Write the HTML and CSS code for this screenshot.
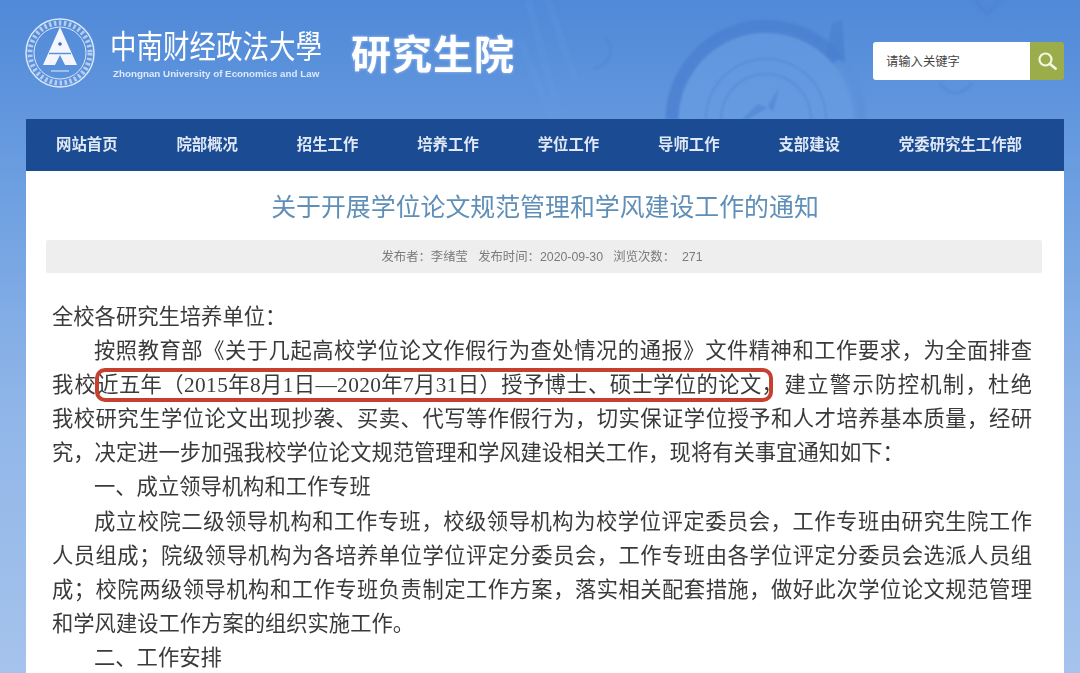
FILE: index.html
```html
<!DOCTYPE html>
<html>
<head>
    <title>关于开展学位论文规范管理和学风建设工作的通知</title>
    <meta charset="UTF-8" />
    <link rel="stylesheet" href="styles.css">
</head>
<body>
    <svg class="bgArt" width="1080" height="119" viewBox="0 0 1080 119" fill="none">
        <circle cx="766" cy="121" r="92" fill="#6a9fe2" fill-opacity="0.55"/>
        <path d="M672 119A94 94 0 0 1 838 60" stroke="#4a80cf" stroke-width="13" stroke-opacity="0.8"/>
        <path d="M838 60A94 94 0 0 1 860 119" stroke="#5a90d8" stroke-width="13" stroke-opacity="0.6"/>
        <path d="M826 56L832 24L842 20L845 62Z" fill="#4a80cf" fill-opacity="0.75"/>
        <g stroke="#4d84d0" stroke-opacity="0.6" stroke-width="1.500">
            <path d="M706 119A60 60 0 0 1 826 119"/>
            <path d="M721 119A45 45 0 0 1 811 119"/>
            <path d="M604 36A18 18 0 0 1 594 68" stroke-width="2"/>
            <path d="M940 84Q955 102 972 84" stroke-width="2"/>
            <path d="M975 0L987 14L1000 0" stroke-width="4"/>
        </g>
        <path d="M742 119L758 104L768 108L748 119Z" fill="#5087d2" fill-opacity="0.7"/>
        <path d="M768 106L779 88L773 112Z" fill="#5087d2" fill-opacity="0.7"/>
        <path d="M528 0L560 119M548 0L575 80M520 40L552 119" stroke="#6da0e2" stroke-width="8" stroke-opacity="0.15"/>
    </svg>
    <div class="page">
        <div class="header">
            <svg class="seal" width="70" height="70" viewBox="0 0 70 70" fill="none">
                <circle cx="35" cy="35" r="34" stroke="#dbe8f9" stroke-width="1.500"/>
                <circle cx="35" cy="35" r="26" stroke="#dbe8f9" stroke-width="1"/>
                <circle cx="35" cy="35" r="30" stroke="#dbe8f9" stroke-width="5" stroke-dasharray="2.500 2.500" stroke-opacity="0.7"/>
                <path d="M35 9L52 47H40L35 37L30 47H18Z" fill="#f3f7fd"/>
                <path d="M24 35.500h22" stroke="#5b93d9" stroke-width="1.500"/>
                <circle cx="35" cy="26" r="1.800" fill="#3f6fb5"/>
                <path d="M26 53h18" stroke="#e4eefb" stroke-width="1"/>
            </svg>
            <div class="school">
                <div class="schoolCn">中南财经政法大學</div>
                <div class="schoolEn">Zhongnan University of Economics and Law</div>
            </div>
            <div class="dept">研究生院</div>
            <div class="search">
                <div class="searchInput">请输入关键字</div>
                <div class="searchBtn">
                    <svg width="20" height="20" viewBox="0 0 20 20" fill="none" stroke="#f4f6e6">
                        <circle cx="8.500" cy="8.500" r="6" stroke-width="2.200"/>
                        <path d="M13 13l5.500 4.500" stroke-width="2.800" stroke-linecap="round"/>
                    </svg>
                </div>
            </div>
        </div>

        <div class="nav">
            <a>网站首页</a>
            <a>院部概况</a>
            <a>招生工作</a>
            <a>培养工作</a>
            <a>学位工作</a>
            <a>导师工作</a>
            <a>支部建设</a>
            <a>党委研究生工作部</a>
        </div>

        <div class="content">
            <h1 class="title">关于开展学位论文规范管理和学风建设工作的通知</h1>
            <div class="meta">发布者&#65306;李绪莹&nbsp;&nbsp;&nbsp;发布时间&#65306;2020-09-30&nbsp;&nbsp;&nbsp;浏览次数&#65306;&nbsp;&nbsp;271</div>
            <div class="article">
                <div class="line last">全校各研究生培养单位&#65306;</div>
                <div class="line indent">按照教育部《关于几起高校学位论文作假行为查处情况的通报》文件精神和工作要求&#65292;为全面排查</div>
                <div class="line">我校<span class="mark">近五年&#65288;2015年8月1日—2020年7月31日&#65289;授予博士、硕士学位的论文&#65292;</span>建立警示防控机制&#65292;杜绝</div>
                <div class="line">我校研究生学位论文出现抄袭、买卖、代写等作假行为&#65292;切实保证学位授予和人才培养基本质量&#65292;经研</div>
                <div class="line last">究&#65292;决定进一步加强我校学位论文规范管理和学风建设相关工作&#65292;现将有关事宜通知如下&#65306;</div>
                <div class="line last indent">一、成立领导机构和工作专班</div>
                <div class="line indent">成立校院二级领导机构和工作专班&#65292;校级领导机构为校学位评定委员会&#65292;工作专班由研究生院工作</div>
                <div class="line">人员组成&#65307;院级领导机构为各培养单位学位评定分委员会&#65292;工作专班由各学位评定分委员会选派人员组</div>
                <div class="line">成&#65307;校院两级领导机构和工作专班负责制定工作方案&#65292;落实相关配套措施&#65292;做好此次学位论文规范管理</div>
                <div class="line last">和学风建设工作方案的组织实施工作。</div>
                <div class="line last indent">二、工作安排</div>
            </div>
        </div>
    </div>
</body>
</html>
```

FILE: styles.css
```css
html, body
{
    margin: 0;
    height: 100%;
    overflow: hidden;
}

body
{
    font-family: "Liberation Serif", "Noto Sans CJK SC", serif;
    background: linear-gradient(180deg, #5089d8 0, #6a9de0 170px, #8fb5e8 400px, #a5c3ec 100%);
    position: relative;
}

.bgArt
{
    position: absolute;
    left: 0;
    top: 0;
    filter: blur(0.8px);
}

.page
{
    position: relative;
    margin: 0 16px 0 26px;
    filter: blur(0.4px);
}

.header
{
    height: 119px;
    display: flex;
    align-items: center;
    color: #fff;
    font-family: "Noto Sans CJK SC", sans-serif;
}

.seal
{
    margin: -13px 0 0 -1px;
}

.school
{
    margin: -16px 0 0 15px;
    width: 213px;
}

.schoolCn
{
    font-size: 26.500px;
    line-height: 40px;
    white-space: nowrap;
    transform: scaleY(1.2);
}

.schoolEn
{
    margin: 3px 0 0 3px;
    font-family: "Liberation Sans", sans-serif;
    font-size: 9.800px;
    font-weight: bold;
    white-space: nowrap;
    color: #dde9f9;
}

.dept
{
    margin: -15px 0 0 28px;
    font-size: 40px;
    font-weight: bold;
    letter-spacing: 1px;
    text-shadow: 0 0 3px rgba(255, 255, 255, 0.5);
}

.search
{
    display: flex;
    margin: 2px 0 0 auto;
    height: 38px;
    border-radius: 3px;
    overflow: hidden;
}

.searchInput
{
    width: 144px;
    padding-left: 13px;
    background: #fff;
    color: #444;
    font-size: 12.300px;
    line-height: 38px;
}

.searchBtn
{
    width: 34px;
    background: #9bac4a;
    display: flex;
    align-items: center;
    justify-content: center;
}

.nav
{
    height: 48px;
    padding: 0 42px 4px 30px;
    display: flex;
    align-items: center;
    justify-content: space-between;
    background: #1b4b93;
    color: #dfe8f4;
    font-family: "Noto Sans CJK SC", sans-serif;
    font-size: 15.400px;
    font-weight: bold;
}

.content
{
    background: #fff;
    padding: 0 32px 0 26px;
    height: 502px;
    overflow: hidden;
}

.title
{
    margin: 16px 0 0 0;
    padding-left: 6px;
    text-align: center;
    font-family: "Noto Sans CJK SC", sans-serif;
    font-size: 24.900px;
    font-weight: normal;
    line-height: 36px;
    color: #5f8fb8;
}

.meta
{
    margin: 17px -10px 0 -6px;
    height: 33px;
    line-height: 34px;
    text-align: center;
    background: #eeeeee;
    border-radius: 2px;
    color: #7a7a7a;
    font-size: 12.350px;
    font-family: "Liberation Sans", "Noto Sans CJK SC", sans-serif;
    padding-right: 4px;
    box-sizing: border-box;
}

.article
{
    margin-top: 27px;
    color: #3a3a3a;
    font-size: 21.300px;
    line-height: 34.100px;
}

.line
{
    text-align: justify;
    text-align-last: justify;
    white-space: nowrap;
}

.line.last
{
    text-align-last: left;
}

.line.indent
{
    text-indent: 42px;
}

.mark
{
    position: relative;
    display: inline-block;
    letter-spacing: 0.400px;
}

.mark::after
{
    content: "";
    position: absolute;
    left: -2px;
    right: 10px;
    top: 0;
    bottom: 0;
    border: 4px solid #c5402f;
    border-radius: 10px;
}
```
